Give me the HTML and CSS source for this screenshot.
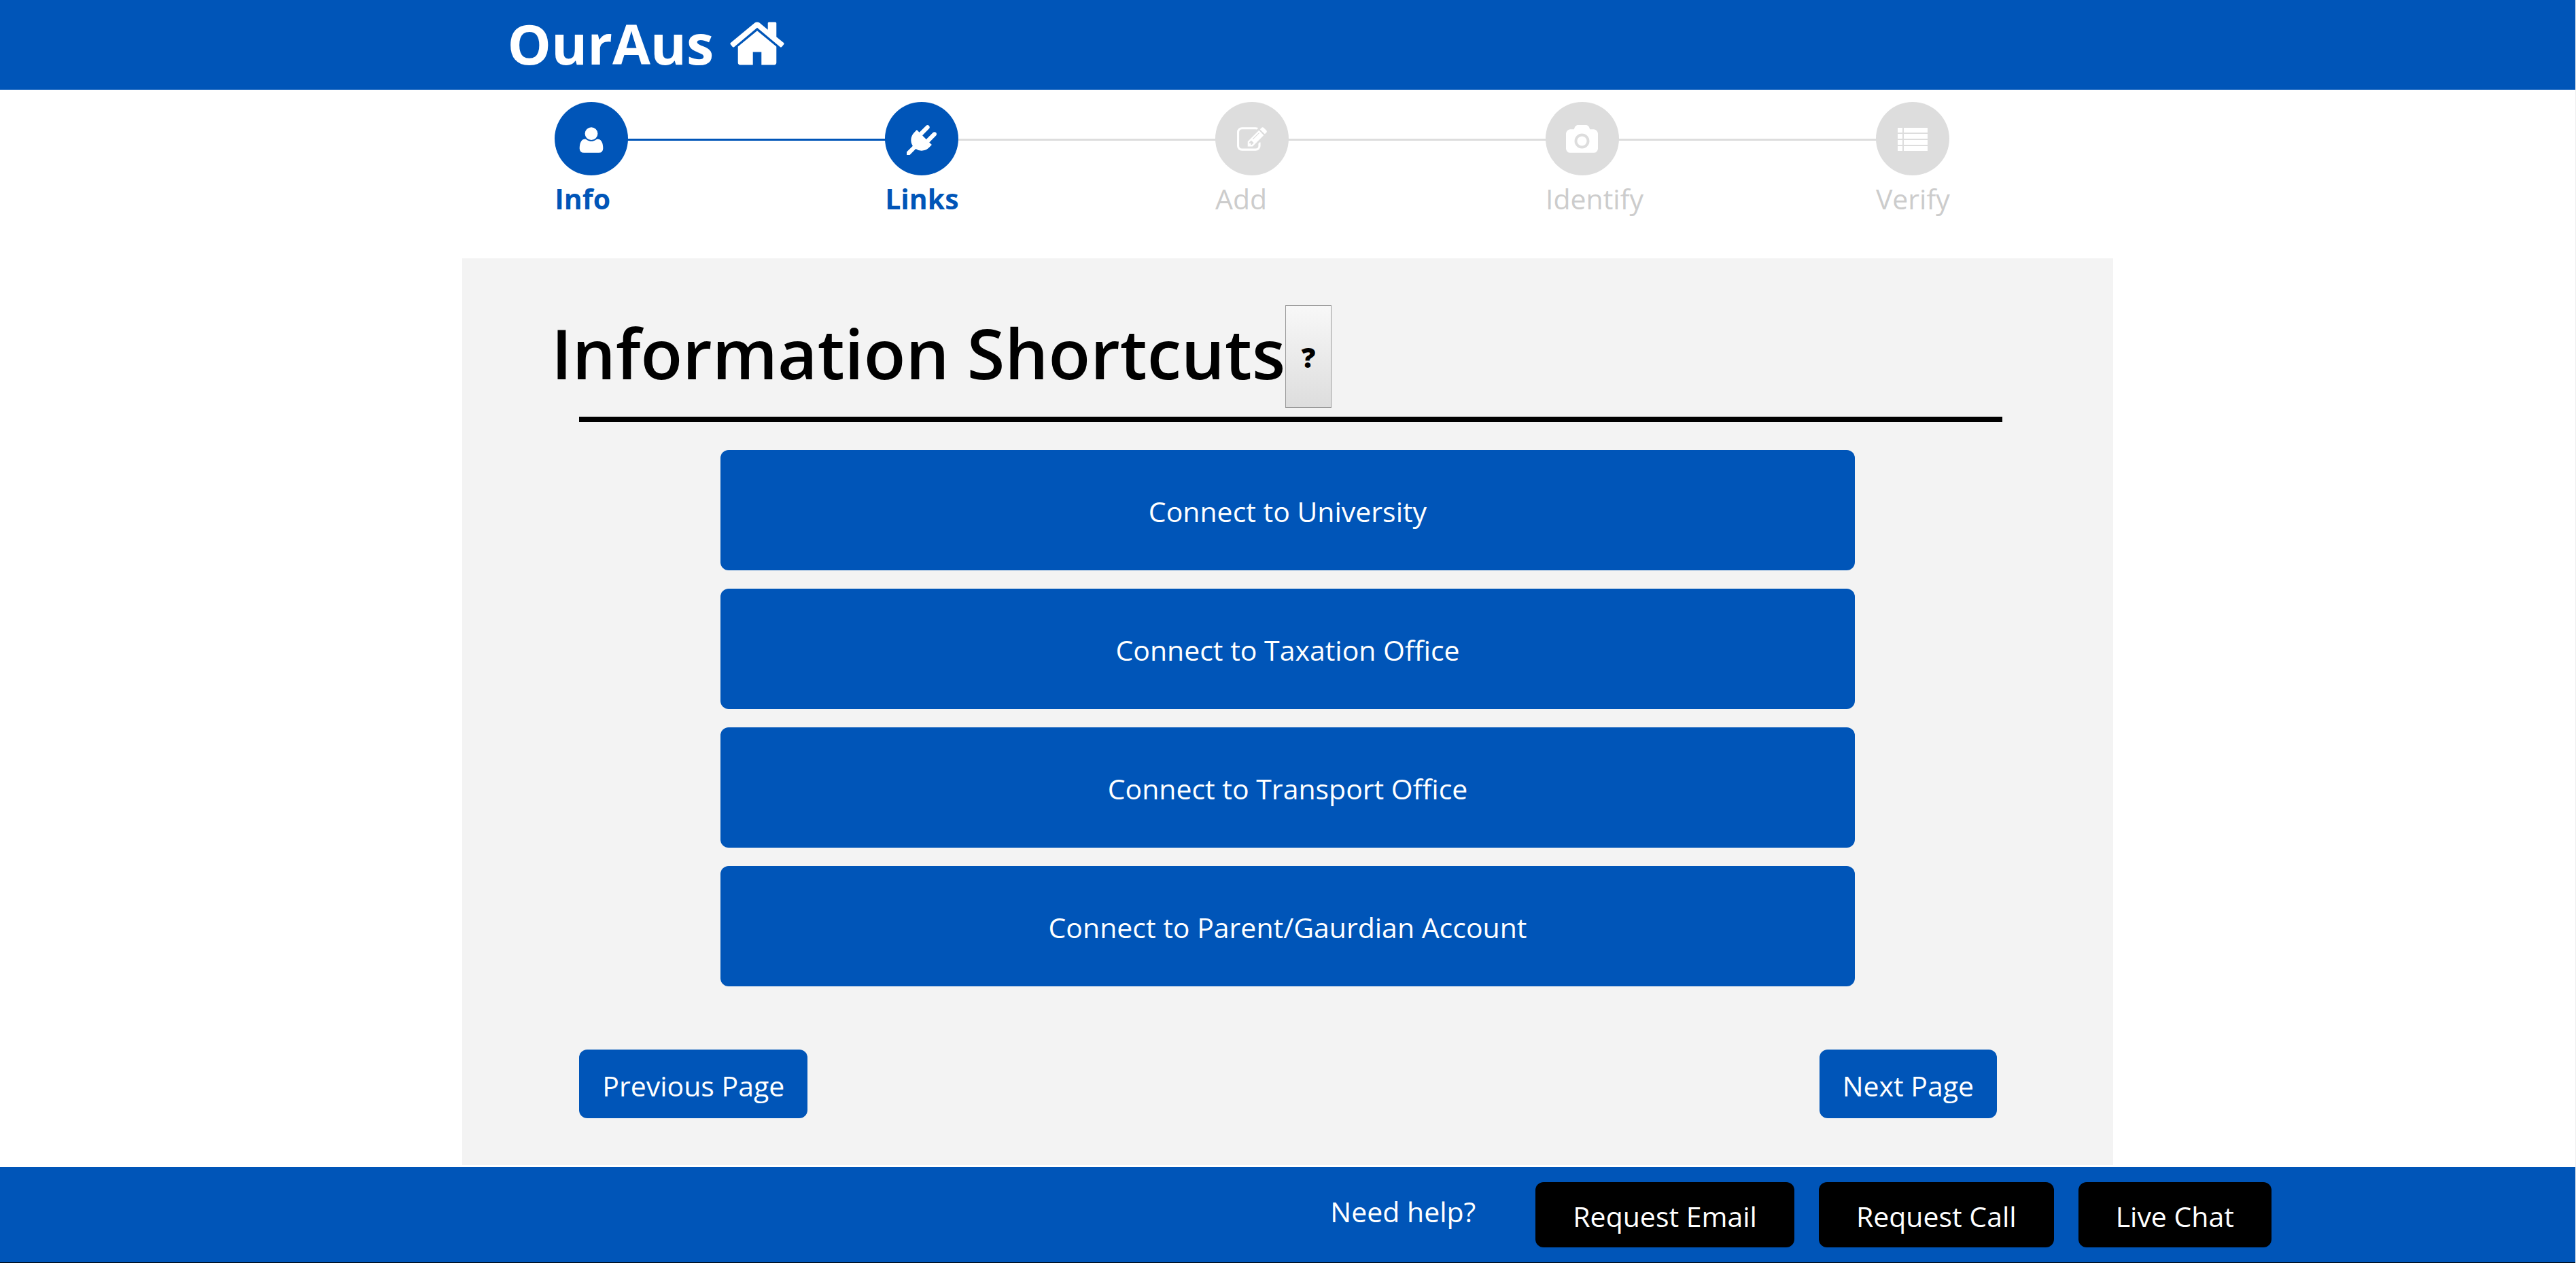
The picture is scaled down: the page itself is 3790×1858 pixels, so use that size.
FILE: index.html
```html
<!DOCTYPE html>
<html lang="en">
<head>
<meta charset="utf-8">
<meta name="viewport" content="width=device-width, initial-scale=1">
<title>OurAus - Information Shortcuts</title>
<link rel="stylesheet" href="styles.css">
</head>
<body>
<header class="site-header">
  <a class="brand" href="#">
    <span>OurAus</span>
    <svg class="brand-icon" viewBox="0 0 1792 1792" aria-hidden="true"><path d="M1472 992v480q0 26-19 45t-45 19h-384v-384h-256v384h-384q-26 0-45-19t-19-45v-480q0-1 .5-3t.5-3l575-474 575 474q1 2 1 6zm223-69l-62 74q-8 9-21 11h-3q-13 0-21-7l-692-577-692 577q-12 8-24 7-13-2-21-11l-62-74q-8-10-7-23.5t11-21.5l719-599q32-26 76-26t76 26l244 204v-195q0-14 9-23t23-9h192q14 0 23 9t9 23v408l219 182q10 8 11 21.5t-7 23.5z"/></svg>
  </a>
</header>

<nav class="progress" aria-label="Progress">
  <ol class="steps">
    <li class="step step-done step-filled">
      <span class="step-dot"><svg class="step-icon" viewBox="0 0 1792 1792" aria-hidden="true"><path d="M1600 1405q0 120-73 189.5t-194 69.5h-874q-121 0-194-69.5t-73-189.5q0-53 3.5-103.5t14-109 26.5-108.5 43-97.5 62-81 85.5-53.5 111.5-20q9 0 42 21.5t74.5 48 108 48 133.5 21.5 133.5-21.5 108-48 74.5-48 42-21.5q61 0 111.5 20t85.5 53.5 62 81 43 97.5 26.5 108.5 14 109 3.5 103.5zm-320-893q0 159-112.5 271.5t-271.5 112.5-271.5-112.5-112.5-271.5 112.5-271.5 271.5-112.5 271.5 112.5 112.5 271.5z"/></svg></span>
      <span class="step-label">Info</span>
    </li>
    <li class="step step-done" aria-current="step">
      <span class="step-dot"><svg class="step-icon" viewBox="0 0 1792 1792" aria-hidden="true"><path d="M1755 453q37 38 37 90.500t-37 90.500l-401 400 150 150-160 160q-163 163-389.500 186.500t-411.500-100.500l-362 362h-181v-181l362-362q-124-185-100.500-411.500t186.500-389.500l160-160 150 150 400-401q38-37 91-37t90 37 37 90.500-37 90.500l-400 401 234 234 401-400q38-37 91-37t90 37z"/></svg></span>
      <span class="step-label">Links</span>
    </li>
    <li class="step">
      <span class="step-dot"><svg class="step-icon" viewBox="0 0 1792 1792" aria-hidden="true"><path d="M888 1184l116-116-152-152-116 116v56h96v96h56zm440-720q-16-16-33 1l-350 350q-17 17-1 33t33-1l350-350q17-17 1-33zm80 594v190q0 119-84.500 203.500t-203.500 84.500h-832q-119 0-203.500-84.500t-84.500-203.500v-832q0-119 84.500-203.500t203.500-84.500h832q63 0 117 25 15 7 18 23 3 17-9 29l-49 49q-14 14-32 8-23-6-45-6h-832q-66 0-113 47t-47 113v832q0 66 47 113t113 47h832q66 0 113-47t47-113v-126q0-13 9-22l64-64q15-15 35-7t20 29zm-96-738l288 288-672 672h-288v-288zm444 132l-92 92-288-288 92-92q28-28 68-28t68 28l152 152q28 28 28 68t-28 68z"/></svg></span>
      <span class="step-label">Add</span>
    </li>
    <li class="step">
      <span class="step-dot"><svg class="step-icon step-icon-wide" viewBox="0 0 1920 1792" aria-hidden="true"><path d="M960 672q119 0 203.500 84.500t84.500 203.500-84.500 203.500-203.500 84.500-203.500-84.500-84.500-203.500 84.500-203.500 203.500-84.500zm704-416q106 0 181 75t75 181v896q0 106-75 181t-181 75h-1408q-106 0-181-75t-75-181v-896q0-106 75-181t181-75h224l51-136q19-49 69.500-84.500t103.500-35.500h512q53 0 103.500 35.500t69.500 84.500l51 136h224zm-704 1152q185 0 316.500-131.500t131.500-316.500-131.500-316.500-316.500-131.500-316.500 131.500-131.500 316.500 131.500 316.500 316.500 131.500z"/></svg></span>
      <span class="step-label">Identify</span>
    </li>
    <li class="step">
      <span class="step-dot"><svg class="step-icon" viewBox="0 0 44 44" aria-hidden="true"><path d="M0 4h7v7H0zM9 4h35v7H9zM0 13h7v7H0zM9 13h35v7H9zM0 22h7v7H0zM9 22h35v7H9zM0 31h7v7H0zM9 31h35v7H9z"/></svg></span>
      <span class="step-label">Verify</span>
    </li>
  </ol>
</nav>

<main class="panel">
  <div class="title-row">
    <h1 class="title">Information Shortcuts</h1>
    <button class="hint" type="button" aria-label="Help">?</button>
  </div>
  <hr class="rule">
  <div class="links">
    <button class="btn btn-link" type="button">Connect to University</button>
    <button class="btn btn-link" type="button">Connect to Taxation Office</button>
    <button class="btn btn-link" type="button">Connect to Transport Office</button>
    <button class="btn btn-link" type="button">Connect to Parent/Gaurdian Account</button>
  </div>
  <div class="pager">
    <button class="btn btn-page" type="button">Previous Page</button>
    <button class="btn btn-page" type="button">Next Page</button>
  </div>
</main>

<footer class="help-bar">
  <span class="help-text">Need help?</span>
  <div class="help-actions">
    <button class="btn btn-help" type="button">Request Email</button>
    <button class="btn btn-help" type="button">Request Call</button>
    <button class="btn btn-help" type="button">Live Chat</button>
  </div>
</footer>
</body>
</html>
```
FILE: styles.css
```css
:root {
  --blue: #0055b8;
  --muted: #dddddd;
  --column: 64.12%;
}

* {
  box-sizing: border-box;
}

body {
  margin: 0;
  min-height: 100vh;
  display: flex;
  flex-direction: column;
  border-right: 1px solid #eee;
  background: #fff;
  color: #000;
  font-family: "Open Sans", "Noto Sans", sans-serif;
  font-size: 41px;
  line-height: 60px;
}

.site-header {
  display: flex;
  align-items: flex-start;
  height: 132px;
  padding-left: 19.7%;
  background: var(--blue);
}

.brand {
  display: flex;
  align-items: center;
  gap: 20px;
  color: #fff;
  font-size: 81px;
  font-weight: 700;
  line-height: 128px;
  text-decoration: none;
}

.brand-icon {
  width: 88px;
  height: 88px;
  fill: currentColor;
}

.progress {
  width: var(--column);
  margin: 18px auto 0;
  height: 230px;
}

.steps {
  display: grid;
  grid-template-columns: repeat(5, 1fr);
  margin: 0;
  padding: 0;
  list-style: none;
}

.step {
  position: relative;
  padding-left: 28.1%;
  color: #ccc;
}

/* Connector to the next step, behind the dots */
.step:not(:last-child)::before {
  content: "";
  position: absolute;
  top: 54px;
  left: 39%;
  width: 100%;
  height: 3px;
  background: var(--muted);
}

.step.step-filled::before {
  background: var(--blue);
}

.step-dot {
  position: relative;
  z-index: 1;
  display: flex;
  align-items: center;
  justify-content: center;
  width: 108px;
  height: 108px;
  padding-top: 4px;
  border-radius: 50%;
  background: var(--muted);
}

.step-icon {
  width: 44px;
  height: 44px;
  fill: #fff;
}

.step-icon-wide {
  width: 47px;
}

.step-label {
  display: block;
  margin-top: 4px;
}

.step-done {
  color: var(--blue);
  font-weight: 700;
}

.step-done .step-dot {
  background: var(--blue);
}

.panel {
  flex: 1;
  width: var(--column);
  margin: 0 auto 3px;
  padding: 69px 0;
  background: #f3f3f3;
}

.title-row {
  display: flex;
  padding-left: 5.4%;
}

.title {
  margin: 0;
  font-size: 101px;
  font-weight: 600;
  line-height: 140px;
}

.hint {
  width: 68px;
  height: 151px;
  padding: 0;
  border: 1px solid #999;
  background: linear-gradient(#f8f8f8, #dddddd);
  color: #000;
  font-family: inherit;
  font-size: 41px;
  font-weight: 800;
}

.rule {
  width: 86.2%;
  height: 8px;
  margin: 13px auto 41px 7.1%;
  border: 0;
  background: #000;
}

.btn {
  border: 0;
  border-radius: 12px;
  background: var(--blue);
  color: #fff;
  font: inherit;
}

.links {
  display: grid;
  gap: 27px;
  width: 68.7%;
  margin: 0 auto;
}

.btn-link {
  padding: 60px 36px 57px;
}

.pager {
  display: flex;
  justify-content: space-between;
  margin-top: 93px;
  padding: 0 7.05% 0 7.1%;
}

.btn-page {
  padding: 23px 34px 18px;
}

.help-bar {
  display: flex;
  justify-content: flex-end;
  height: 141px;
  padding: 22px 11.8% 0 0;
  border-bottom: 1px solid #000;
  background: var(--blue);
  color: #fff;
}

.help-text {
  margin-right: 88px;
  padding-top: 13px;
}

.help-actions {
  display: flex;
  align-items: flex-start;
  gap: 36px;
}

.btn-help {
  padding: 20px 55px 16px;
  background: #000;
}
```
